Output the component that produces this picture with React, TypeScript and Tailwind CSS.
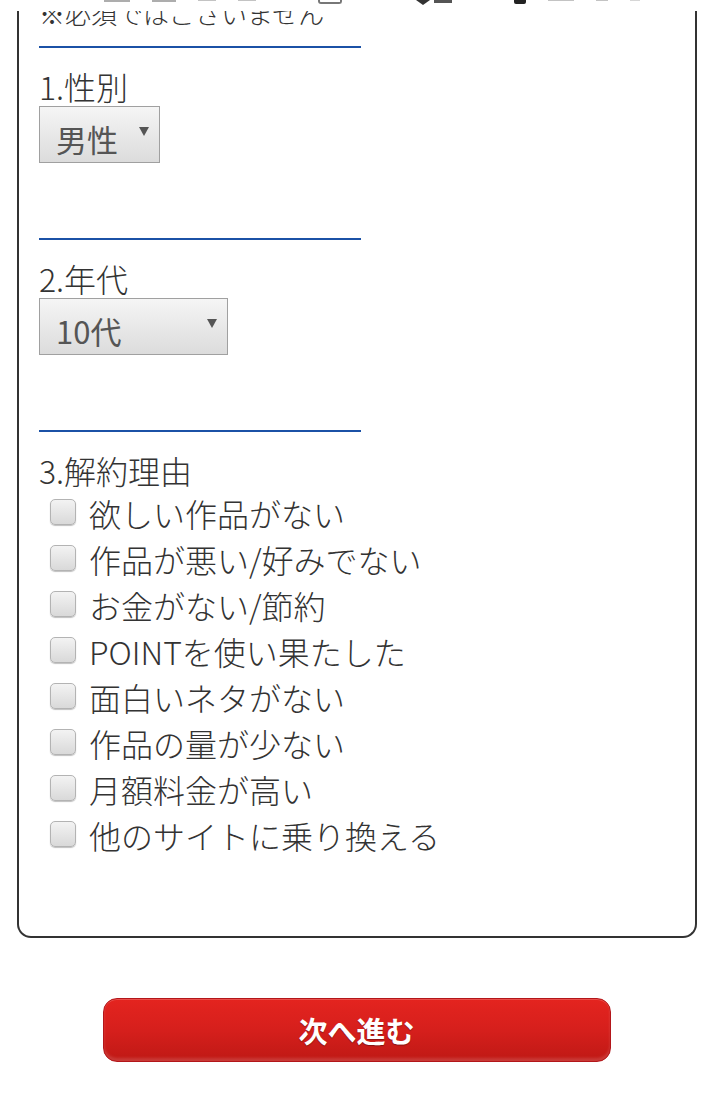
import React from "react";

const font = { fontFamily: '"Noto Sans CJK JP", "Noto Sans", sans-serif' };

function Select({ value, width }: { value: string; width: string }) {
  return (
    <div
      className={`h-[57px] ${width} border border-[#a0a0a0] bg-gradient-to-b from-[#f5f5f5] to-[#dcdcdc] flex items-start justify-between pl-[16px] pr-[10px]`}
    >
      <span className="pt-[12px] text-[31px] leading-[40px] text-[#555]">{value}</span>
      <svg className="mt-[20px]" width="10" height="9" viewBox="0 0 10 9">
        <polygon points="0,0 10,0 5,9" fill="#555" />
      </svg>
    </div>
  );
}

function Checkbox({ label }: { label: string }) {
  return (
    <div className="flex items-center h-[46px] pl-[11px] gap-[13px]">
      <div className="w-[26px] h-[26px] rounded-[5px] border border-[#b3b3b3] bg-gradient-to-b from-[#f3f3f3] to-[#d9d9d9] shadow-[0_1px_1px_rgba(0,0,0,0.25)] -mt-[2px]" />
      <span className="text-[32px] leading-[46px] text-[#333] font-light">{label}</span>
    </div>
  );
}

const reasons = [
  "欲しい作品がない",
  "作品が悪い/好みでない",
  "お金がない/節約",
  "POINTを使い果たした",
  "面白いネタがない",
  "作品の量が少ない",
  "月額料金が高い",
  "他のサイトに乗り換える",
];

function Rule() {
  return <div className="h-[2px] w-[322px] bg-[#1b51a6]" />;
}

function Section({ title, children }: { title: string; children: React.ReactNode }) {
  return (
    <div className="flex flex-col">
      <Rule />
      <div className="mt-[18px] text-[32px] leading-[40px] font-light">{title}</div>
      {children}
    </div>
  );
}

export default function App() {
  return (
    <div className="relative w-[716px] h-[1096px] bg-white overflow-hidden" style={font}>
      {/* status bar overlay fragment */}
      <div className="absolute top-0 left-0 w-full h-[11px] bg-white z-10 flex items-start pl-[104px] gap-[22px]">
        <div className="w-[26px] h-[2px] bg-[#777] opacity-60" />
        <div className="w-[24px] h-[2px] bg-[#777] opacity-60" />
        <div className="w-[18px] h-[1px] bg-[#888] opacity-50" />
        <div className="w-[18px] h-[1px] bg-[#888] opacity-50" />
        <div className="w-[24px] h-[4px] border-2 border-t-0 border-[#777] rounded-b-[3px] ml-[40px]" />
        <div className="w-[14px] h-[5px] bg-[#333] [clip-path:polygon(0_0,100%_0,50%_100%)] ml-[52px]" />
        <div className="w-[18px] h-[3px] bg-[#555] -ml-[18px]" />
        <div className="w-[12px] h-[4px] bg-[#222] rounded-b-[2px] ml-[40px]" />
        <div className="w-[26px] h-[1px] bg-[#888] opacity-50" />
        <div className="w-[12px] h-[1px] bg-[#888] opacity-50" />
        <div className="w-[10px] h-[1px] bg-[#999] opacity-40" />
      </div>

      {/* form box */}
      <div className="ml-[17px] w-[680px] border-2 border-t-0 border-[#333] rounded-b-[14px] pl-[20px] pb-[78px] text-[#333] flex flex-col">
        <div className="text-[26px] leading-[26px] text-[#333] font-light">※必須ではございません</div>

        <div className="mt-[20px] flex flex-col gap-[75px]">
          <Section title="1.性別">
            <Select value="男性" width="w-[121px]" />
          </Section>
          <Section title="2.年代">
            <Select value="10代" width="w-[189px]" />
          </Section>
          <Section title="3.解約理由">
            <div className="flex flex-col">
              {reasons.map((r) => (
                <Checkbox key={r} label={r} />
              ))}
            </div>
          </Section>
        </div>
      </div>

      {/* next button */}
      <div className="mt-[60px] flex justify-center pr-[3px]">
        <button className="w-[508px] h-[64px] rounded-[14px] border border-[#b3161a] bg-gradient-to-b from-[#e4241f] via-[#d61f1c] to-[#bf1915] shadow-[inset_0_-3px_3px_rgba(255,255,255,0.15),inset_0_1px_0_rgba(255,255,255,0.2)] flex items-center justify-center">
          <span className="text-white font-bold text-[29px] leading-[40px] [text-shadow:0_1px_1px_rgba(0,0,0,0.35)]">
            次へ進む
          </span>
        </button>
      </div>
    </div>
  );
}
